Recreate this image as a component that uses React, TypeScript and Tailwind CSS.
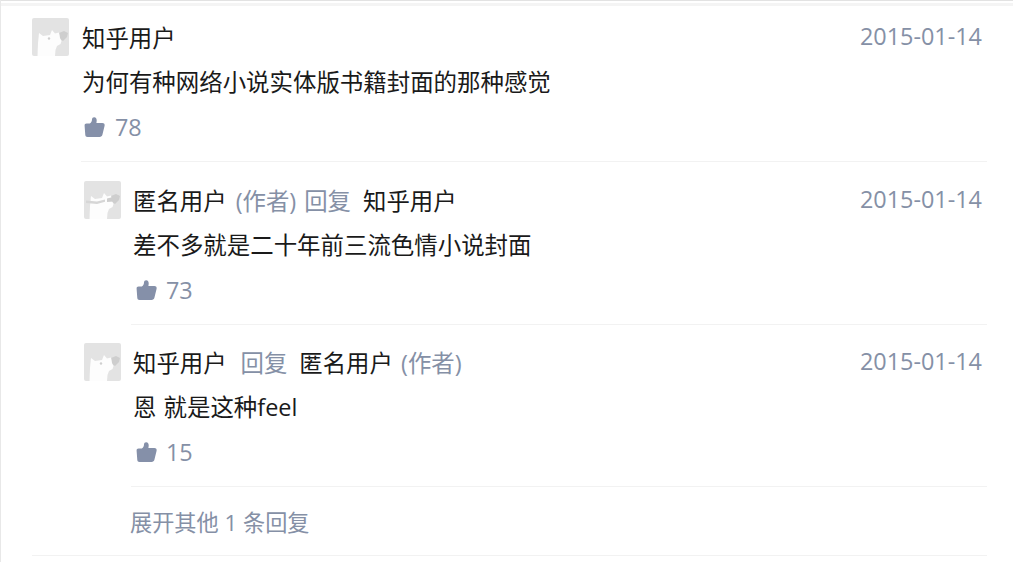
interface Comment {
  id: number
  author: string
  isAuthor?: boolean
  replyTo?: string
  replyToAuthor?: boolean
  content: string
  likes: number
  date: string
  flat?: boolean
}

const ROOT: Comment = {
  id: 1,
  author: '知乎用户',
  content: '为何有种网络小说实体版书籍封面的那种感觉',
  likes: 78,
  date: '2015-01-14',
}

const REPLIES: Comment[] = [
  {
    id: 2,
    author: '匿名用户',
    isAuthor: true,
    replyTo: '知乎用户',
    content: '差不多就是二十年前三流色情小说封面',
    likes: 73,
    date: '2015-01-14',
    flat: true,
  },
  {
    id: 3,
    author: '知乎用户',
    replyTo: '匿名用户',
    replyToAuthor: true,
    content: '恩 就是这种feel',
    likes: 15,
    date: '2015-01-14',
  },
]

// Fox silhouette; the anonymous variant has a strip across the eyes
function Avatar({ masked }: { masked?: boolean }) {
  return (
    <svg viewBox="0 0 37 38" className="block h-[38px] w-[37px] shrink-0 rounded-[2px]">
      <rect width="37" height="38" fill="#e3e3e3" />
      <path d="M27 15l5-2 4 2-1 4-4 4-3-2z" fill="#cecece" />
      <path
        d="M5.5 38L6 25l1-10 4 3 7-1 2-5 3 3.5 4-1 1 5.5 1.5 3-1 3-3.5 2-1.5 4-.5 6z"
        fill="#fdfdfd"
      />
      {masked ? (
        <>
          <path d="M2 19.5l11 1 8-2v2.2l-8 2.3-11-1z" fill="#d6d6d6" />
          <path d="M23 17.5l12-3v3l-5 3-7 .5z" fill="#cecece" />
        </>
      ) : (
        <circle cx="17" cy="20.5" r="1.2" fill="#cfcfcf" />
      )}
    </svg>
  )
}

function ThumbUp() {
  return (
    <svg viewBox="0 0 21 21" className="block h-[21px] w-[21px]" fill="#8590a9">
      <path d="M2.6 6.4h3.2C7.4 5.4 7.9 4 8 2.4 8.1.9 9.1 0 10.4.2c2.2.3 2.8 2.3 2 5.7h5.9c1.8 0 2.7 1.3 2.3 2.9l-2.2 9c-.4 1.5-1.3 2.1-2.8 2.1H3.5c-1.4 0-2.1-.7-2.2-2L.6 8.7c-.1-1.4.6-2.3 2-2.3z" />
    </svg>
  )
}

function CommentRow({ comment, nested }: { comment: Comment; nested?: boolean }) {
  const padding = !nested ? 'pt-3' : comment.flat ? 'pt-[19px]' : 'pt-[18px]'
  return (
    <div className={`flex ${padding}`}>
      <Avatar masked={comment.isAuthor} />
      <div className={`min-w-0 flex-1 border-b border-[#f2f2f2] pb-[11px] ${nested ? 'ml-2.5' : 'ml-3'}`}>
        <div className={nested ? 'pl-0.5' : 'pl-px'}>
          <div className="flex h-10 items-center justify-between pr-[5px]">
            <div className="flex items-center pt-0.5 whitespace-pre">
              <span>{comment.author}</span>
              {comment.isAuthor && <span className="ml-[3px] text-[#8590a6]"> (作者)</span>}
              {comment.replyTo && (
                <>
                  <span className={`mr-3 text-[#8590a6] ${comment.isAuthor ? 'ml-2' : 'ml-[14px]'}`}>回复</span>
                  <span>{comment.replyTo}</span>
                </>
              )}
              {comment.replyToAuthor && <span className="ml-0.5 text-[#8590a6]"> (作者)</span>}
            </div>
            <span className="pb-0.5 text-[#8590a6]">{comment.date}</span>
          </div>
          <div className="flex h-12 items-center pt-0.5 text-[23.45px] [word-spacing:1px]">{comment.content}</div>
          <div className={`flex h-11 items-center text-[#8590a6] ${nested ? 'gap-[9px] pl-[3px]' : 'gap-2.5 pl-0.5'}`}>
            <div className="pb-0.5">
              <ThumbUp />
            </div>
            <span>{comment.likes}</span>
          </div>
        </div>
      </div>
    </div>
  )
}

export default function App() {
  return (
    <div className="h-[562px] w-[1013px] overflow-hidden border-l border-[#e8e8e8] bg-white font-['Open_Sans','Noto_Sans_CJK_SC',sans-serif] text-[23.4px] leading-none text-[#1a1a1a]">
      <div className="h-px bg-[#e2e2e2]" />
      <div className="mt-0.5 h-[3px] bg-[#f4f4f4]" />
      <div className="mr-[26px] ml-[31px] border-b border-[#f2f2f2]">
        <CommentRow comment={ROOT} />
        <div className="pl-[52px]">
          {REPLIES.map(reply => (
            <CommentRow key={reply.id} comment={reply} nested />
          ))}
          <div className="ml-[46px] flex h-[68px] items-center pt-[5px] text-[22.2px] text-[#8590a6]">
            展开其他 1 条回复
          </div>
        </div>
      </div>
    </div>
  )
}
